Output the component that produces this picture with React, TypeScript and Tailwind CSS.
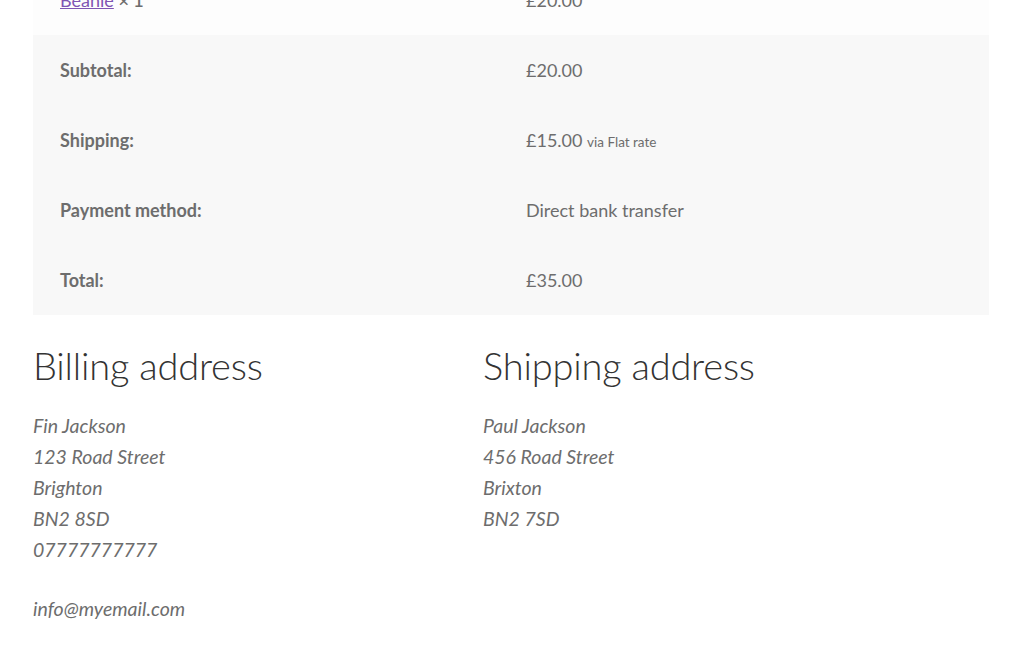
const rows = [
  { label: 'Subtotal:', value: <>£20.00</> },
  { label: 'Shipping:', value: <>£15.00 <small className="text-[13.5px]">via Flat rate</small></> },
  { label: 'Payment method:', value: <>Direct bank transfer</> },
  { label: 'Total:', value: <>£35.00</> },
]

function Address({ title, lines, phone, email }: { title: string; lines: string[]; phone?: string; email?: string }) {
  return (
    <div>
      <h2 className="text-[38px] leading-[48px] font-light text-[#333333] tracking-[-0.2px] mb-[21px]">{title}</h2>
      <address className="italic text-[19.5px] leading-[31px] text-[#6d6d6d]">
        {lines.map((l) => <div key={l}>{l}</div>)}
        {phone && <p>{phone}</p>}
        {email && <p className="mt-[28px]">{email}</p>}
      </address>
    </div>
  )
}

export default function App() {
  return (
    <div className="min-h-[652px] bg-white px-[33px] text-[#6d6d6d] overflow-hidden" style={{ fontFamily: 'Lato, "Noto Sans", sans-serif' }}>
      <div className="w-[956px] text-[18px]">
        <div className="grid grid-cols-[466px_1fr] h-[70px] -mt-[35px] bg-[#fdfdfd] items-center">
          <div className="px-[27px]">
            <a href="#" className="text-[#7f54b3] underline">Beanie</a> <strong className="font-semibold">× 1</strong>
          </div>
          <div className="px-[27px]">£20.00</div>
        </div>
        {rows.map((r) => (
          <div key={r.label} className="grid grid-cols-[466px_1fr] h-[70px] bg-[#f8f8f8] items-center">
            <div className="px-[27px] font-bold">{r.label}</div>
            <div className="px-[27px]">{r.value}</div>
          </div>
        ))}
      </div>
      <div className="grid grid-cols-[450px_1fr] mt-[26px]">
        <Address title="Billing address" lines={['Fin Jackson', '123 Road Street', 'Brighton', 'BN2 8SD']} phone="07777777777" email="info@myemail.com" />
        <Address title="Shipping address" lines={['Paul Jackson', '456 Road Street', 'Brixton', 'BN2 7SD']} />
      </div>
    </div>
  )
}
